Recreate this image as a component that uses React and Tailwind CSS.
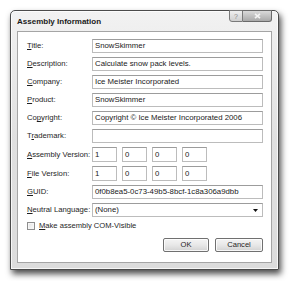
import React from 'react';

const font = "font-['Liberation_Sans',Arial,sans-serif]";

// label text with one underlined access key letter
function Label({ text, k }) {
  return (
    <span className="w-[65px] shrink-0 text-[7.7px] text-[#1e1e1e] whitespace-nowrap leading-none">
      {text.slice(0, k)}
      <span className="underline underline-offset-[1px]">{text[k]}</span>
      {text.slice(k + 1)}
    </span>
  );
}

function Box({ children, className = '' }) {
  return (
    <div
      className={`h-full flex items-center border border-[#bcbcbc] border-t-[#9c9c9c] bg-white px-[2px] text-[7.8px] text-[#1a1a1a] leading-none whitespace-nowrap overflow-hidden ${className}`}
    >
      {children}
    </div>
  );
}

function Row({ text, k, h = 'h-[14px]', children }) {
  return (
    <div className={`flex items-center ${h}`}>
      <Label text={text} k={k} />
      {children}
    </div>
  );
}

function VersionRow({ text, k }) {
  return (
    <Row text={text} k={k} h="h-[15px]">
      <div className="flex gap-[5px] h-full">
        {['1', '0', '0', '0'].map((v, i) => (
          <Box key={i} className="w-[25px]">{v}</Box>
        ))}
      </div>
    </Row>
  );
}

function DialogButton({ children, width }) {
  return (
    <button
      className={`${width} h-[14px] rounded-[2px] border border-[#707070] bg-gradient-to-b from-[#f4f4f4] via-[#e8e8e8] to-[#d2d2d2] text-[7.6px] text-[#1e1e1e] leading-none shadow-[inset_0_0_0_1px_rgba(255,255,255,0.8)]`}
    >
      {children}
    </button>
  );
}

export default function App() {
  const fields = [
    ['Title:', 0, 'SnowSkimmer'],
    ['Description:', 0, 'Calculate snow pack levels.'],
    ['Company:', 0, 'Ice Meister Incorporated'],
    ['Product:', 0, 'SnowSkimmer'],
    ['Copyright:', 2, 'Copyright \u00a9 Ice Meister Incorporated 2006'],
    ['Trademark:', 1, ''],
  ];

  return (
    <div className={`w-[292px] h-[281px] bg-white overflow-hidden pt-[10px] pl-[10px] ${font}`}>
      {/* Window frame */}
      <div className="w-[269px] h-[260px] flex flex-col rounded-t-[5px] border border-[#4b4b4b] bg-gradient-to-b from-[#f2f2f2] via-[#e0e0e0] to-[#dcdcdc] shadow-[2px_4px_6px_rgba(0,0,0,0.7),inset_0_0_0_1px_rgba(255,255,255,0.75)]">
        {/* Title bar */}
        <div className="relative h-[20px] shrink-0 flex items-center pl-[6px]">
          <span className="text-[8px] font-bold text-[#1a1a1a] leading-none mt-[2px]">Assembly Information</span>
          <div className="absolute top-[-1px] right-[6px] flex">
            <div className="w-[14px] h-[12px] rounded-bl-[3px] border border-[#7a7a7a] bg-gradient-to-b from-[#f0f0f0] to-[#cfcfcf] flex items-center justify-center text-[7px] text-[#8a8a8a] leading-none">
              ?
            </div>
            <div className="w-[29px] h-[12px] rounded-br-[3px] border border-l-0 border-[#6a6a6a] bg-gradient-to-b from-[#dadada] to-[#a9a9a9] flex items-center justify-center">
              <svg width="7" height="6" viewBox="0 0 7 6">
                <path d="M1 0.8 L6 5.2 M6 0.8 L1 5.2" stroke="#f4f4f4" strokeWidth="1.6" />
              </svg>
            </div>
          </div>
        </div>

        {/* Client area */}
        <div className="flex-1 mx-[6px] mb-[6px] bg-white border border-[#a5a5a5] pt-[7px] pl-[9px] pr-[8px] flex flex-col">
          <div className="flex flex-col gap-[4px]">
            {fields.map(([text, k, value]) => (
              <Row key={text} text={text} k={k}>
                <Box className="flex-1">{value}</Box>
              </Row>
            ))}
            <VersionRow text="Assembly Version:" k={0} />
            <VersionRow text="File Version:" k={0} />
            <Row text="GUID:" k={0}>
              <Box className="flex-1">0f0b8ea5-0c73-49b5-8bcf-1c8a306a9dbb</Box>
            </Row>
            <Row text="Neutral Language:" k={0}>
              <Box className="flex-1 justify-between pr-[4px]">
                <span>(None)</span>
                <svg width="5" height="3" viewBox="0 0 5 3">
                  <path d="M0 0 H5 L2.5 3 Z" fill="#111" />
                </svg>
              </Box>
            </Row>
          </div>

          <div className="mt-[4px] h-[9px] flex items-center">
            <div className="w-[8px] h-[8px] border border-[#8e8e8e] bg-gradient-to-br from-[#e4e4e4] to-[#fbfbfb] shadow-[inset_0_0_0_1px_#f6f6f6]" />
            <span className="ml-[4px] text-[7.6px] text-[#1e1e1e] leading-none">
              <span className="underline underline-offset-[1px]">M</span>ake assembly COM-Visible
            </span>
          </div>

          <div className="mt-[8px] flex justify-end gap-[6px]">
            <DialogButton width="w-[46px]">OK</DialogButton>
            <DialogButton width="w-[48px]">Cancel</DialogButton>
          </div>
        </div>
      </div>
    </div>
  );
}
